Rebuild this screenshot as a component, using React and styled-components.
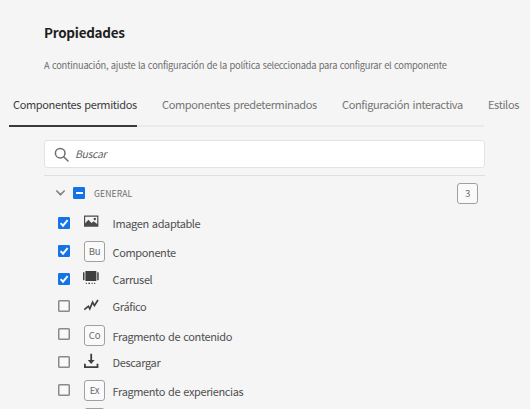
import React from 'react';
import styled, { createGlobalStyle } from 'styled-components';

const GlobalStyle = createGlobalStyle`
  * { box-sizing: border-box; }
  body {
    margin: 0;
    background: #f5f5f5;
    font-family: "Noto Sans CJK SC", "Noto Sans", sans-serif;
    overflow: hidden;
  }
`;

const Page = styled.main`
  width: 530px;
  height: 409px;
  overflow: hidden;
  background: #f5f5f5;
`;

const Header = styled.header`
  padding: 22px 0 0 44px;
  white-space: nowrap;
`;

const Title = styled.h1`
  margin: 0;
  font-size: 13.5px;
  font-weight: 700;
  line-height: 20px;
  letter-spacing: -0.27px;
  color: #1e1e1e;
`;

const Subtitle = styled.p`
  margin: 16px 0 0;
  font-size: 9.3px;
  line-height: 14px;
  letter-spacing: -0.25px;
  word-spacing: 0.7px;
  color: #6e6e6e;
`;

const TabBar = styled.nav`
  display: flex;
  width: 475px;
  height: 32px;
  margin: 23px 0 0 9px;
  border-bottom: 2px solid #eaeaea;
  white-space: nowrap;
`;

const Tab = styled.div`
  flex: none;
  width: ${(p) => p.$width}px;
  height: 32px;
  margin-right: ${(p) => p.$gap || 0}px;
  padding-left: ${(p) => (p.$active ? 4 : 0)}px;
  border-bottom: 2px solid ${(p) => (p.$active ? '#3a3a3a' : 'transparent')};
  font-size: 11px;
  line-height: 18px;
  letter-spacing: -0.36px;
  word-spacing: 1px;
  color: ${(p) => (p.$active ? '#3c3c3c' : '#747474')};
`;

const SearchField = styled.div`
  display: flex;
  align-items: center;
  gap: 6px;
  width: 441px;
  height: 28px;
  margin: 13px 0 0 44px;
  padding-left: 9px;
  border: 1px solid #e3e3e3;
  border-radius: 3px;
  background: #fff;
`;

const Placeholder = styled.span`
  margin-top: -1px;
  font-size: 10.4px;
  font-style: italic;
  line-height: 16px;
  letter-spacing: -0.3px;
  color: #5e5e5e;
`;

const Group = styled.section`
  width: 441px;
  margin: 7px 0 0 44px;
  border-top: 1px solid #dfdfdf;
`;

const GroupHeader = styled.div`
  display: flex;
  align-items: center;
  height: 34px;
  padding: 0 7px 0 11px;
`;

const GroupName = styled.div`
  flex: 1;
  margin-left: 9px;
  font-size: 8.6px;
  line-height: 14px;
  letter-spacing: 0.1px;
  color: #6e6e6e;
`;

const Chevron = styled.svg`
  flex: none;
  width: 11px;
  height: 8px;
  margin-right: 7px;
`;

const Box = styled.svg`
  flex: none;
  display: block;
  width: 12px;
  height: 12px;
`;

const Tag = styled.span`
  display: flex;
  align-items: center;
  justify-content: center;
  width: 21px;
  height: 21px;
  border: 1px solid #a0a0a0;
  border-radius: 3px;
  background: #fafafa;
  font-size: 9.6px;
  line-height: 15px;
  letter-spacing: -0.2px;
  color: #6b6b6b;
`;

const Row = styled.div`
  display: grid;
  grid-template-columns: 26px 28.6px 1fr;
  height: 27.8px;
  padding-left: 14px;
`;

const Cell = styled.div`
  display: flex;
  align-items: center;
  height: 28px;
  margin-top: ${(p) => p.$shift || 0}px;
`;

const Label = styled(Cell)`
  font-size: 11px;
  letter-spacing: -0.38px;
  word-spacing: 1px;
  line-height: 18px;
  color: #505050;
  white-space: pre;
`;

const Icon = styled.svg`
  width: 16px;
  height: 16px;
  margin-left: ${(p) => p.$pull || 0}px;
`;

function Checkbox({ state }) {
  if (state === 'off') {
    return (
      <Box viewBox="0 0 12 12">
        <rect x=".75" y=".75" width="10.5" height="10.5" rx=".8" fill="#f9f9f9" stroke="#8a8a8a" strokeWidth="1.5" />
      </Box>
    );
  }
  return (
    <Box viewBox="0 0 12 12">
      <rect width="12" height="12" rx="1.3" fill="#1473e6" />
      {state === 'on' ? (
        <path d="M2.6 6.2 5 8.7 9.6 3.1" fill="none" stroke="#fff" strokeWidth="1.9" />
      ) : (
        <rect x="3" y="5" width="7" height="2" fill="#fff" />
      )}
    </Box>
  );
}

const ImageIcon = () => (
  <Icon viewBox="0 0 16 16">
    <path fill="#4b4b4b" fillRule="evenodd" d="M0 2.6h14.4v11.2H0zM1.2 3.8v6.4l3.2-3.4L7.6 10l2-1.7 3.6 2.6V3.8z" />
    <circle cx="10.8" cy="6" r="1.2" fill="#4b4b4b" />
  </Icon>
);

const CarouselIcon = () => (
  <Icon viewBox="0.6 0 16 16" fill="#3f3f3f" $pull={-1}>
    <rect x="3" y="1" width="11" height="10" rx=".5" />
    <rect x=".6" y="2.2" width="1.5" height="8" rx=".4" />
    <rect x="14.8" y="2.2" width="1.5" height="8" rx=".4" />
    <path d="M3.4 12.8h1v1.2h-1zM6 12.8h1.6v1.2H6zM9.2 12.8h1.1v1.2H9.2zM11.8 12.8h1v1.2h-1z" />
  </Icon>
);

const ChartIcon = () => (
  <Icon viewBox="0 0 16 16" fill="none" stroke="#3f3f3f" strokeWidth="1.7">
    <path d="M.3 12.6 4.4 9.2 5.8 11.8 8.6 5.2 10.4 8.6 14 3" />
  </Icon>
);

const DownloadIcon = () => (
  <Icon viewBox="0 0 16 16" fill="none" stroke="#3f3f3f" strokeWidth="1.8">
    <path d="M.9 10.8v3.4h12.6v-3.4M7.2 .8v7" />
    <path d="M3.8 7h6.8L7.2 11z" fill="#3f3f3f" stroke="none" />
  </Icon>
);

const rows = [
  { label: 'Imagen adaptable', state: 'on', icon: <ImageIcon />, iconShift: -3, shift: -1 },
  { label: 'Componente', state: 'on', icon: <Tag>Bu</Tag>, iconShift: 0, shift: 0 },
  { label: 'Carrusel', state: 'on', icon: <CarouselIcon />, iconShift: -2, shift: -1 },
  { label: 'Gráfico', state: 'off', icon: <ChartIcon />, iconShift: -2, shift: -1 },
  { label: 'Fragmento de contenido', state: 'off', icon: <Tag>Co</Tag>, iconShift: 0, shift: 0.5 },
  { label: 'Descargar', state: 'off', icon: <DownloadIcon />, iconShift: -2, shift: -1 },
  { label: 'Fragmento de experiencias', state: 'off', icon: <Tag>Ex</Tag>, iconShift: 0, shift: 0 },
];

export default function App() {
  return (
    <Page>
      <GlobalStyle />
      <Header>
        <Title>Propiedades</Title>
        <Subtitle>
          A continuación, ajuste la configuración de la política seleccionada para configurar el componente
        </Subtitle>
      </Header>
      <TabBar>
        <Tab $active $width={128} $gap={25}>Componentes permitidos</Tab>
        <Tab $width={155} $gap={25}>Componentes predeterminados</Tab>
        <Tab $width={121} $gap={25}>Configuración interactiva</Tab>
        <Tab $width={33}>Estilos</Tab>
      </TabBar>
      <SearchField>
        <svg width="15" height="15" viewBox="0 0 15 15" fill="none" stroke="#6e6e6e" strokeWidth="1.5">
          <circle cx="6.2" cy="6.2" r="4.8" />
          <path d="m9.7 9.7 4.3 4.3" strokeLinecap="round" />
        </svg>
        <Placeholder>Buscar</Placeholder>
      </SearchField>
      <Group>
        <GroupHeader>
          <Chevron viewBox="0 0 11 8" fill="none" stroke="#858585" strokeWidth="1.7">
            <path d="m1.8 2 3.7 3.7L9.2 2" strokeLinecap="round" />
          </Chevron>
          <Checkbox state="mixed" />
          <GroupName>GENERAL</GroupName>
          <Tag>3</Tag>
        </GroupHeader>
        {rows.map((r) => (
          <Row key={r.label}>
            <Cell $shift={-1}><Checkbox state={r.state} /></Cell>
            <Cell $shift={r.iconShift}>{r.icon}</Cell>
            <Label $shift={r.shift}>{r.label}</Label>
          </Row>
        ))}
        <Row>
          <Cell />
          <Cell><Tag /></Cell>
        </Row>
      </Group>
    </Page>
  );
}
